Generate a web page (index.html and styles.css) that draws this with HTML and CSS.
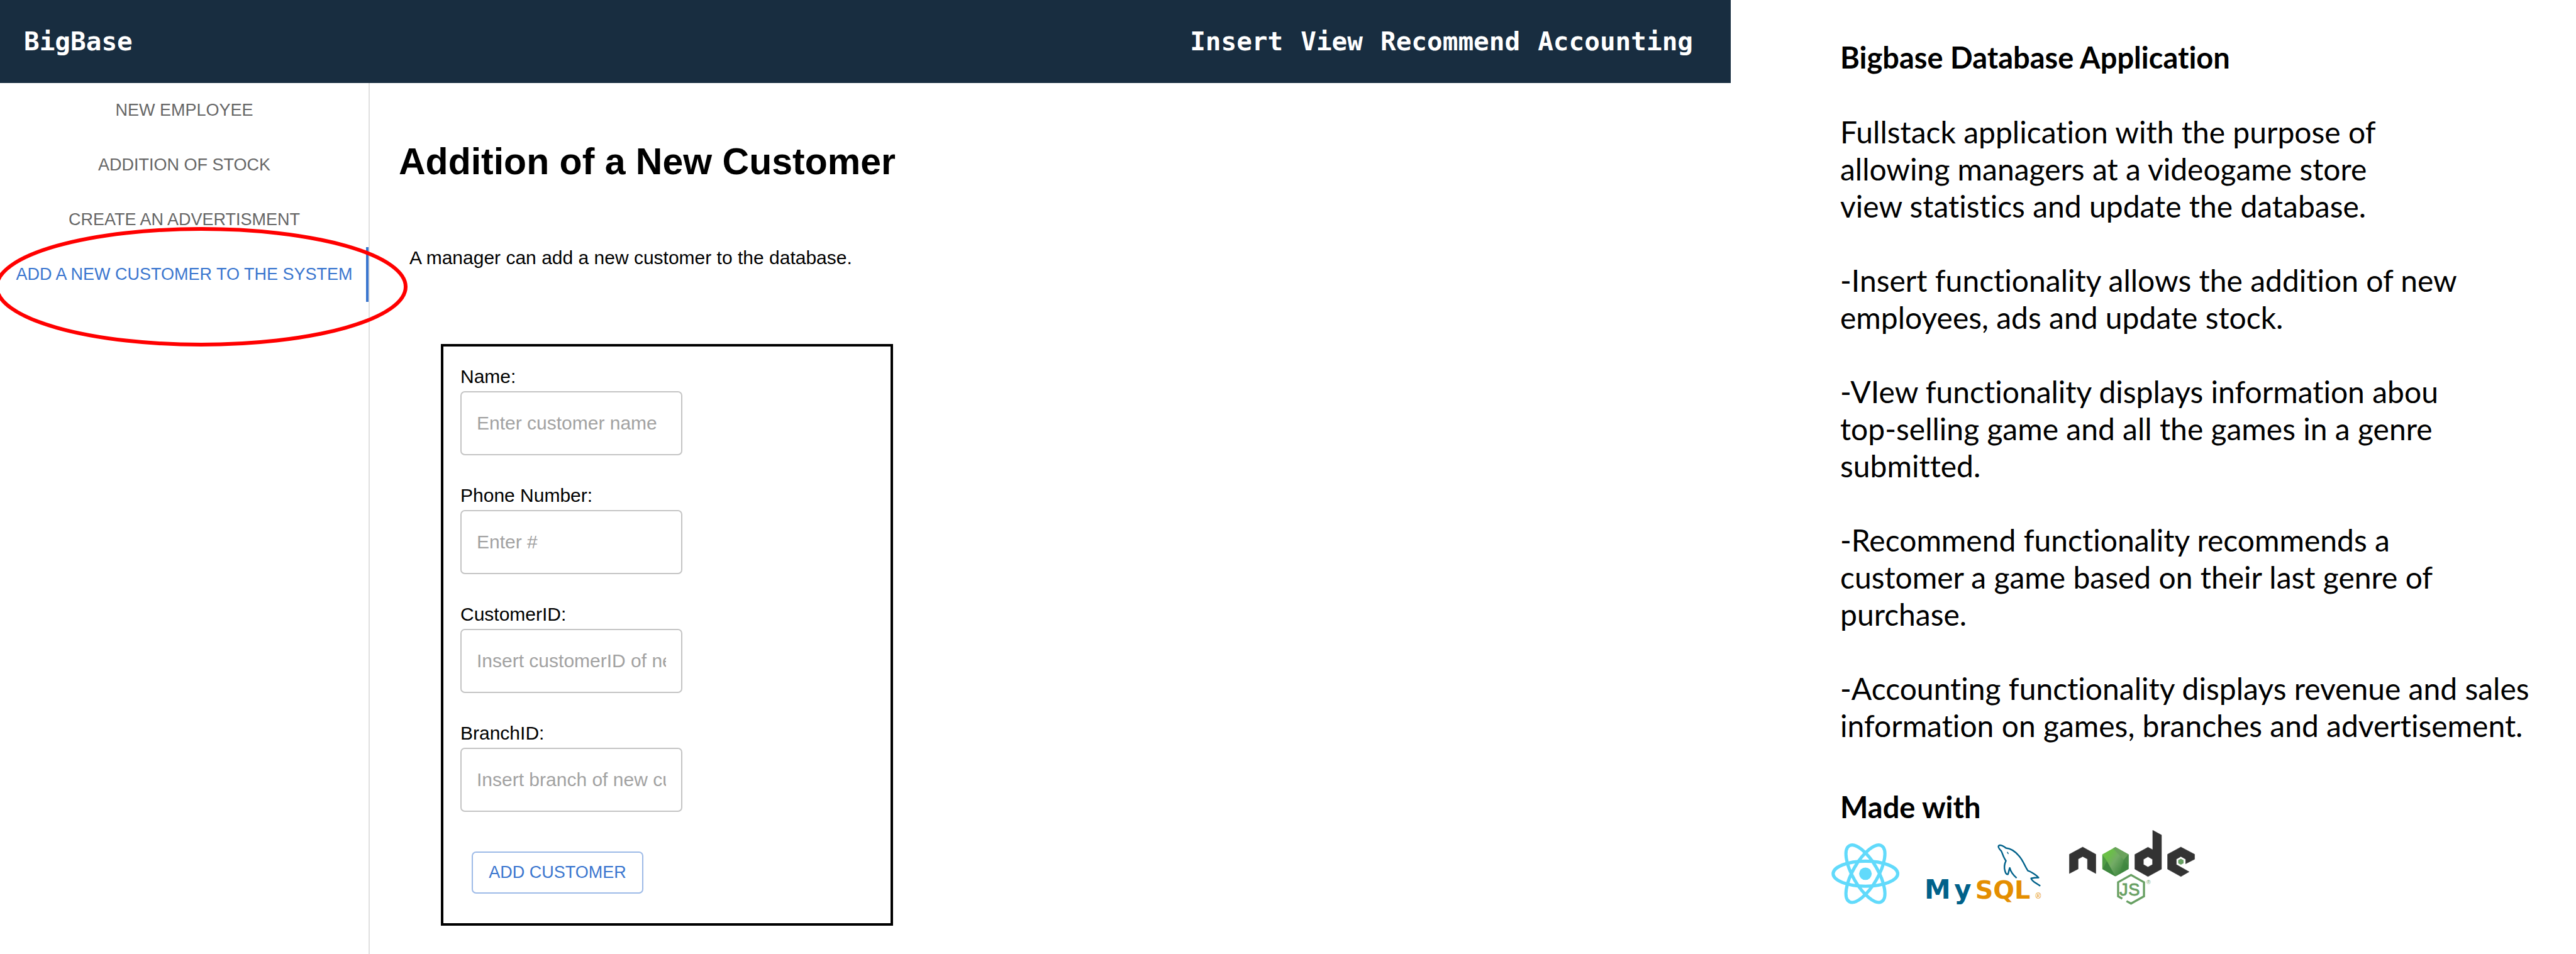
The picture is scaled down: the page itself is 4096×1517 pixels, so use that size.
FILE: index.html
```html
<!DOCTYPE html>
<html lang="en">
<head>
<meta charset="utf-8">
<title>BigBase</title>
<link rel="stylesheet" href="styles.css">
</head>
<body>
<div class="page">
  <div class="app">
    <header class="topbar">
      <a class="brand" href="#">BigBase</a>
      <nav class="topnav">
        <a href="#">Insert</a>
        <a href="#">View</a>
        <a href="#">Recommend</a>
        <a href="#">Accounting</a>
      </nav>
    </header>
    <div class="workspace">
      <aside class="sidebar">
        <div class="tabs" role="tablist">
          <button class="tab" type="button" role="tab">NEW EMPLOYEE</button>
          <button class="tab" type="button" role="tab">ADDITION OF STOCK</button>
          <button class="tab" type="button" role="tab">CREATE AN ADVERTISMENT</button>
          <button class="tab tab-active" type="button" role="tab" aria-selected="true">ADD A NEW CUSTOMER TO THE SYSTEM</button>
          <svg class="highlight" viewBox="0 0 656 190" aria-hidden="true">
            <ellipse cx="328" cy="95" rx="325" ry="92"/>
          </svg>
        </div>
      </aside>
      <main class="content">
        <h1 class="title">Addition of a New Customer</h1>
        <p class="intro">A manager can add a new customer to the database.</p>
        <form class="card">
          <div class="field">
            <label for="name">Name:</label>
            <input id="name" type="text" placeholder="Enter customer name">
          </div>
          <div class="field">
            <label for="phone">Phone Number:</label>
            <input id="phone" type="text" placeholder="Enter #">
          </div>
          <div class="field">
            <label for="customer">CustomerID:</label>
            <input id="customer" type="text" placeholder="Insert customerID of new customer">
          </div>
          <div class="field">
            <label for="branch">BranchID:</label>
            <input id="branch" type="text" placeholder="Insert branch of new customer">
          </div>
          <button class="submit" type="button">ADD CUSTOMER</button>
        </form>
      </main>
    </div>
  </div>
  <section class="about">
    <div class="about-text">
      <h2>Bigbase Database Application</h2>
      <p>Fullstack application with the purpose of<br>allowing managers at a videogame store<br>view statistics and update the database.</p>
      <p>-Insert functionality allows the addition of new<br>employees, ads and update stock.</p>
      <p>-VIew functionality displays information abou<br>top-selling game and all the games in a genre<br>submitted.</p>
      <p>-Recommend functionality recommends a<br>customer a game based on their last genre of<br>purchase.</p>
      <p>-Accounting functionality displays revenue and sales<br>information on games, branches and advertisement.</p>
      <h2 class="made-with">Made with</h2>
    </div>
    <div class="logos">
      <svg class="logo-react" viewBox="57 347 357 321" role="img" aria-label="React">
        <circle cx="236" cy="507" r="33" fill="#61dafb"/>
        <g fill="none" stroke="#61dafb" stroke-width="17">
          <ellipse cx="236" cy="507" rx="170" ry="66"/>
          <ellipse cx="236" cy="507" rx="170" ry="66" transform="rotate(60 236 507)"/>
          <ellipse cx="236" cy="507" rx="170" ry="66" transform="rotate(120 236 507)"/>
        </g>
      </svg>
      <svg class="logo-mysql" viewBox="553 345 600 313" role="img" aria-label="MySQL">
        <g transform="translate(870 315)">
          <path d="M277 247L245 226Q228 212 229 207Q245 203 268 203Q258 192 240 181Q222 169 212 167C195 143 190 118 166 90C145 65 125 50 97 48C85 38 66 29 59 36C54 42 63 54 72 63C80 78 84 98 97 115C90 130 86 150 92 168C95 180 101 187 107 186C112 176 112 164 117 152C122 172 135 190 153 205" fill="none" stroke="#00618a" stroke-width="8" stroke-linejoin="round"/>
          <path d="M102 68q8-1 9 12q-7 0-9-12z" fill="#00618a"/>
        </g>
        <g class="wordmark">
          <text x="540" y="628" font-size="138" fill="#00618a">M</text>
          <text x="696" y="628" font-size="138" fill="#00618a">y</text>
          <text x="806" y="628" font-size="131" fill="#e48e00">SQL</text>
        </g>
        <text class="mark" x="1122" y="627" font-size="40" fill="#e48e00">®</text>
      </svg>
      <svg class="logo-node" viewBox="165 60 660 390" role="img" aria-label="Node.js">
        <defs>
          <linearGradient id="leaf" x1="350" y1="160" x2="470" y2="240" gradientUnits="userSpaceOnUse">
            <stop offset="0" stop-color="#6cc24a"/>
            <stop offset=".25" stop-color="#6abf47"/>
            <stop offset=".55" stop-color="#73ab66"/>
            <stop offset="1" stop-color="#3f873f"/>
          </linearGradient>
          <clipPath id="hex"><path d="M408 149L478 188V264L408 304L338 264V188Z"/></clipPath>
        </defs>
        <g fill="#333" stroke="#333" stroke-width="2" stroke-linejoin="round">
          <path d="M166 288V187L236 149L305 187V288L261 264V212L236 199L212 212V264Z"/>
          <path fill-rule="evenodd" d="M604 163V61L650 86V265L579 304L510 265V188L579 150ZM579 200L555 214V241L579 254L603 241V214Z"/>
          <path d="M824 187V213L777 237V213L752 199L728 213V241L795 279L752 304L682 265V187L752 149Z"/>
        </g>
        <path d="M752 210L766 218V234L752 242L738 234V218Z" fill="#68a063"/>
        <g clip-path="url(#hex)">
          <path d="M338 149H478V304H338Z" fill="url(#leaf)"/>
          <path d="M338 188L363 222L338 268Z" fill="#4f9c45"/>
          <path d="M338 268L363 222L408 304Z" fill="#3f873f"/>
          <path d="M388 149H478V186L452 216Z" fill="#6aa35c"/>
          <path d="M478 186L452 216L478 252Z" fill="#4a8c47"/>
          <path d="M452 216L478 252V264L430 292Z" fill="#3f873f" opacity=".6"/>
        </g>
        <path d="M444 420L422 408V334L490 296L558 334V408L490 446L466 433" fill="none" stroke="#68a063" stroke-width="11"/>
        <g class="badge-letters" fill="#68a063" stroke="#68a063" stroke-width="3" font-size="90">
          <text x="429" y="404">J</text>
          <text x="476" y="404">S</text>
        </g>
        <text class="mark" x="571" y="344" font-size="30" fill="#68a063">®</text>
      </svg>
    </div>
  </section>
</div>
</body>
</html>
```
FILE: styles.css
```css
* {
  box-sizing: border-box;
}

body {
  margin: 0;
  background: #fff;
  color: #000;
  font-family: "Liberation Sans", Arial, sans-serif;
}

h1, h2, p {
  margin: 0;
}

.page {
  display: grid;
  grid-template-columns: 2752fr 1344fr;
  min-height: 100vh;
}

.app {
  display: flex;
  flex-direction: column;
}

.topbar {
  display: flex;
  align-items: center;
  justify-content: space-between;
  height: 132px;
  padding: 0 60px 0 38px;
  background: #182d40;
  font: bold 41px "DejaVu Sans Mono", monospace;
}

.topbar a {
  color: #fff;
  text-decoration: none;
}

.topnav {
  display: flex;
  gap: 28px;
}

.workspace {
  display: grid;
  grid-template-columns: 588px 1fr;
  flex: 1;
}

.sidebar {
  border-right: 2px solid #e0e0e0;
}

.tabs {
  position: relative;
  display: flex;
  flex-direction: column;
}

.tab {
  height: 87px;
  padding: 0;
  border: 0;
  background: none;
  color: #666;
  font: 27px "Liberation Sans", Arial, sans-serif;
}

.tab-active {
  border-right: 4px solid #3a76cf;
  border-left: 4px solid transparent;
  color: #3a76cf;
}

.highlight {
  position: absolute;
  top: 229px;
  left: -8px;
  width: 656px;
  height: 190px;
  fill: none;
  stroke: #f00;
  stroke-width: 6px;
  pointer-events: none;
}

.content {
  padding: 91px 46px 46px;
}

.title {
  font-size: 59px;
  line-height: 68px;
}

.intro {
  margin: 102px 0 120px 17px;
  font-size: 30px;
  line-height: 34px;
}

.card {
  display: flex;
  flex-direction: column;
  align-items: flex-start;
  width: 719px;
  margin-left: 67px;
  padding: 31px 27px 47px;
  border: 4px solid #000;
}

.field {
  display: flex;
  flex-direction: column;
  gap: 6px;
  margin-bottom: 47px;
  font-size: 30px;
  line-height: 34px;
}

.field input {
  width: 353px;
  height: 102px;
  padding: 0 24px;
  border: 2px solid #c4c4c4;
  border-radius: 7px;
  background: #fff;
  font: 30px "Liberation Sans", Arial, sans-serif;
}

.field input::placeholder {
  color: #a2a2a2;
}

.submit {
  width: 273px;
  height: 67px;
  margin: 16px 0 0 18px;
  padding: 0;
  border: 2px solid #9dbae7;
  border-radius: 7px;
  background: #fff;
  color: #3a76cf;
  font: 27px "Liberation Sans", Arial, sans-serif;
}

.about {
  padding: 62px 0 0 160px;
  font-family: Lato, "Noto Sans", sans-serif;
  font-variant-ligatures: none;
}

.about-text {
  display: flex;
  flex-direction: column;
  gap: 59px;
  padding-left: 14px;
  font-size: 48px;
  line-height: 59px;
  white-space: nowrap;
}

.about-text h2 {
  font-size: 47px;
  line-height: 59px;
}

.about-text .made-with {
  padding-top: 12px;
}

.logos {
  display: flex;
  align-items: flex-end;
  gap: 44px;
  margin-top: 7px;
}

.logos svg {
  display: block;
  flex: none;
  overflow: visible;
}

.logo-react {
  width: 108px;
  height: 97px;
}

.logo-mysql {
  width: 182px;
  height: 95px;
}

.logo-node {
  width: 200px;
  height: 118px;
}

.wordmark {
  font-family: "DejaVu Sans", sans-serif;
  font-weight: bold;
}

.badge-letters {
  font-family: "Liberation Sans", sans-serif;
}

.mark {
  font-family: "Liberation Sans", sans-serif;
}
```
